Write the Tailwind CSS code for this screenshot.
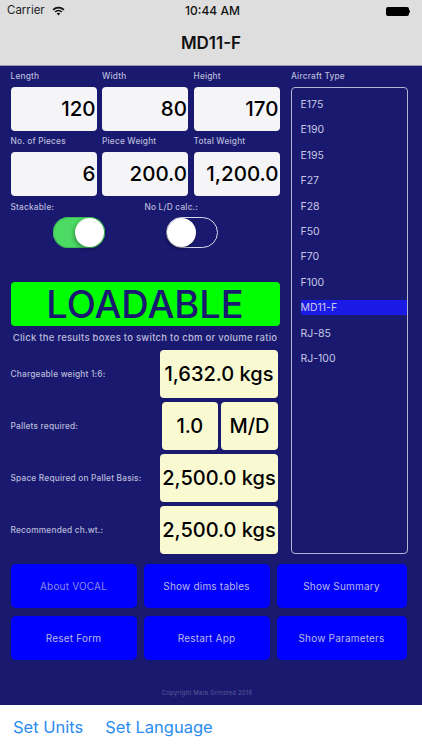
<!DOCTYPE html>
<html lang="en">
<head>
<meta charset="UTF-8">
<meta name="viewport" content="width=device-width, initial-scale=1.0">
<title>MD11-F</title>
<script src="https://cdn.jsdelivr.net/npm/@tailwindcss/browser@4"></script>
</head>
<body class="font-['Inter',sans-serif]">
<div class="w-[422px] h-[750px] flex flex-col overflow-hidden bg-white">
  <!-- nav bar -->
  <div class="h-[66px] bg-[#dedede] border-b border-[#9a9ab0] text-[#111] shrink-0">
    <div class="h-[22px] relative flex items-center px-[7px] text-[11.5px]">
      <span class="text-[#222]">Carrier</span>
      <svg class="ml-[7px]" width="13" height="10" viewBox="0 0 13 10"><path d="M0.5 3.3 A8.5 8.5 0 0 1 12.5 3.3 L11.3 4.5 A6.8 6.8 0 0 0 1.7 4.5 Z M2.6 5.4 A5.5 5.5 0 0 1 10.4 5.4 L9.2 6.6 A3.8 3.8 0 0 0 3.8 6.6 Z M4.7 7.5 A2.6 2.6 0 0 1 8.3 7.5 L6.5 9.4 Z" fill="#111"/></svg>
      <span class="absolute left-0 right-0 pl-[3px] text-center font-medium text-[12px]">10:44 AM</span>
      <div class="ml-auto flex items-center mr-[5px]">
        <div class="w-[23px] h-[9px] bg-black rounded-[2px]"></div>
        <div class="w-[1px] h-[3px] bg-[#333]"></div>
      </div>
    </div>
    <div class="text-center text-[17px] font-semibold leading-[20px] mt-[11px]">MD11-F</div>
  </div>

  <!-- main form -->
  <div class="flex-1 bg-[#191970] text-[#b9b9d8] relative pl-[10.5px]">
    <div class="flex">
      <div class="w-[269px] shrink-0">
        <div class="grid grid-cols-[86px_86px_86px] gap-x-[5.5px] pt-[5px] text-[8.3px] font-medium tracking-[0.2px]">
          <div class="h-[16px] leading-[10px]">Length</div>
          <div class="h-[16px] leading-[10px]">Width</div>
          <div class="h-[16px] leading-[10px]">Height</div>
          <div class="h-[44px] bg-[#f5f5f7] rounded-[4px] text-black text-[20.5px] font-medium tracking-normal text-right pr-[1px] leading-[44px]">120</div>
          <div class="h-[44px] bg-[#f5f5f7] rounded-[4px] text-black text-[20.5px] font-medium tracking-normal text-right pr-[1px] leading-[44px]">80</div>
          <div class="h-[44px] bg-[#f5f5f7] rounded-[4px] text-black text-[20.5px] font-medium tracking-normal text-right pr-[1px] leading-[44px]">170</div>
          <div class="h-[21px] leading-[10px] pt-[5px]">No. of Pieces</div>
          <div class="h-[21px] leading-[10px] pt-[5px]">Piece Weight</div>
          <div class="h-[21px] leading-[10px] pt-[5px]">Total Weight</div>
          <div class="h-[44px] bg-[#f5f5f7] rounded-[4px] text-black text-[20.5px] font-medium tracking-normal text-right pr-[1px] leading-[44px]">6</div>
          <div class="h-[44px] bg-[#f5f5f7] rounded-[4px] text-black text-[20.5px] font-medium tracking-normal text-right pr-[1px] leading-[44px]">200.0</div>
          <div class="h-[44px] bg-[#f5f5f7] rounded-[4px] text-black text-[20.5px] font-medium tracking-normal text-right pr-[1px] leading-[44px]">1,200.0</div>
        </div>

        <div class="flex text-[8.3px] font-medium tracking-[0.2px] leading-[10px] mt-[6px]">
          <div class="w-[134px]">Stackable:</div>
          <div>No L/D calc.:</div>
        </div>
        <div class="flex mt-[5px]">
          <div class="ml-[42.5px] w-[52px] h-[31px] rounded-full bg-[#4cd964] relative shadow-[inset_0_0_0_1px_#3fb856]">
            <div class="absolute right-[1px] top-[1px] w-[29px] h-[29px] rounded-full bg-white shadow-[-1px_2px_4px_rgba(0,0,0,0.35)]"></div>
          </div>
          <div class="ml-[61px] w-[52px] h-[31px] rounded-full border-[1.5px] border-[#d8d8ea] relative">
            <div class="absolute left-[-0.5px] top-[-0.5px] w-[29px] h-[29px] rounded-full bg-white shadow-[-1px_2px_3px_rgba(0,0,0,0.4)]"></div>
          </div>
        </div>

        <div class="mt-[34px] h-[44px] bg-[#00ff00] rounded-[4px] text-[#191970] text-[38px] font-medium text-center leading-[44px]">LOADABLE</div>
        <div class="text-[9.5px] font-medium tracking-[0.25px] text-center leading-[12px] mt-[6px] whitespace-nowrap">Click the results boxes to switch to cbm or volume ratio</div>

        <div class="flex flex-col gap-[4px] mt-[6px] text-[8.3px] font-medium tracking-[0.2px]">
          <div class="flex items-center h-[48px]">
            <div class="w-[149.5px]">Chargeable weight 1:6:</div>
            <div class="w-[118px] h-[48px] bg-[#fafad2] rounded-[4px] text-black text-[20px] font-medium tracking-normal text-center leading-[48px] whitespace-nowrap">1,632.0 kgs</div>
          </div>
          <div class="flex items-center h-[48px]">
            <div class="w-[151px]">Pallets required:</div>
            <div class="w-[56.5px] h-[48px] bg-[#fafad2] rounded-[4px] text-black text-[20px] font-medium tracking-normal text-center leading-[48px]">1.0</div>
            <div class="w-[57px] h-[48px] ml-[3px] bg-[#fafad2] rounded-[4px] text-black text-[20px] font-medium tracking-normal text-center leading-[48px]">M/D</div>
          </div>
          <div class="flex items-center h-[48px]">
            <div class="w-[149.5px] whitespace-nowrap">Space Required on Pallet Basis:</div>
            <div class="w-[118px] h-[48px] bg-[#fafad2] rounded-[4px] text-black text-[20px] font-medium tracking-normal text-center leading-[48px] whitespace-nowrap">2,500.0 kgs</div>
          </div>
          <div class="flex items-center h-[48px]">
            <div class="w-[149.5px]">Recommended ch.wt.:</div>
            <div class="w-[118px] h-[48px] bg-[#fafad2] rounded-[4px] text-black text-[20px] font-medium tracking-normal text-center leading-[48px] whitespace-nowrap">2,500.0 kgs</div>
          </div>
        </div>
      </div>

      <!-- aircraft list -->
      <div class="ml-[11.5px] w-[117px] pt-[5px]">
        <div class="h-[16px] text-[8.3px] font-medium tracking-[0.2px] leading-[10px]">Aircraft Type</div>
        <div class="h-[467px] border border-[#b4b4d6] rounded-[4px] pt-[4px] pl-[8.5px] text-[10.5px] text-[#c8c8e4]">
          <div class="h-[25.4px] leading-[25.4px]">E175</div>
          <div class="h-[25.4px] leading-[25.4px]">E190</div>
          <div class="h-[25.4px] leading-[25.4px]">E195</div>
          <div class="h-[25.4px] leading-[25.4px]">F27</div>
          <div class="h-[25.4px] leading-[25.4px]">F28</div>
          <div class="h-[25.4px] leading-[25.4px]">F50</div>
          <div class="h-[25.4px] leading-[25.4px]">F70</div>
          <div class="h-[25.4px] leading-[25.4px]">F100</div>
          <div class="h-[25.4px] flex items-center"><div class="w-full h-[15px] bg-[#1a1ae6] leading-[15px]">MD11-F</div></div>
          <div class="h-[25.4px] leading-[25.4px]">RJ-85</div>
          <div class="h-[25.4px] leading-[25.4px]">RJ-100</div>
        </div>
      </div>
    </div>

    <!-- buttons -->
    <div class="grid grid-cols-[126px_126px_130px] gap-x-[7px] gap-y-[8px] mt-[10px] text-[10px] text-[#b9b9e8] text-center tracking-[0.2px]">
      <div class="h-[44px] bg-[#0000ff] rounded-[5px] leading-[44px] text-[#8a8ae6]">About VOCAL</div>
      <div class="h-[44px] bg-[#0000ff] rounded-[5px] leading-[44px]">Show dims tables</div>
      <div class="h-[44px] bg-[#0000ff] rounded-[5px] leading-[44px]">Show Summary</div>
      <div class="h-[44px] bg-[#0000ff] rounded-[5px] leading-[44px]">Reset Form</div>
      <div class="h-[44px] bg-[#0000ff] rounded-[5px] leading-[44px]">Restart App</div>
      <div class="h-[44px] bg-[#0000ff] rounded-[5px] leading-[44px]">Show Parameters</div>
    </div>
    <div class="w-[422px] ml-[-10.5px] text-center text-[6px] tracking-[0.2px] text-[#5c5c94] mt-[28px] pr-[8px]">Copyright Mark Grinsted 2016</div>
  </div>

  <!-- toolbar -->
  <div class="h-[45px] shrink-0 bg-white flex items-center pl-[13px] gap-[22px] text-[16.5px] text-[#2a8cf0]">
    <span>Set Units</span>
    <span>Set Language</span>
  </div>
</div>
</body>
</html>
